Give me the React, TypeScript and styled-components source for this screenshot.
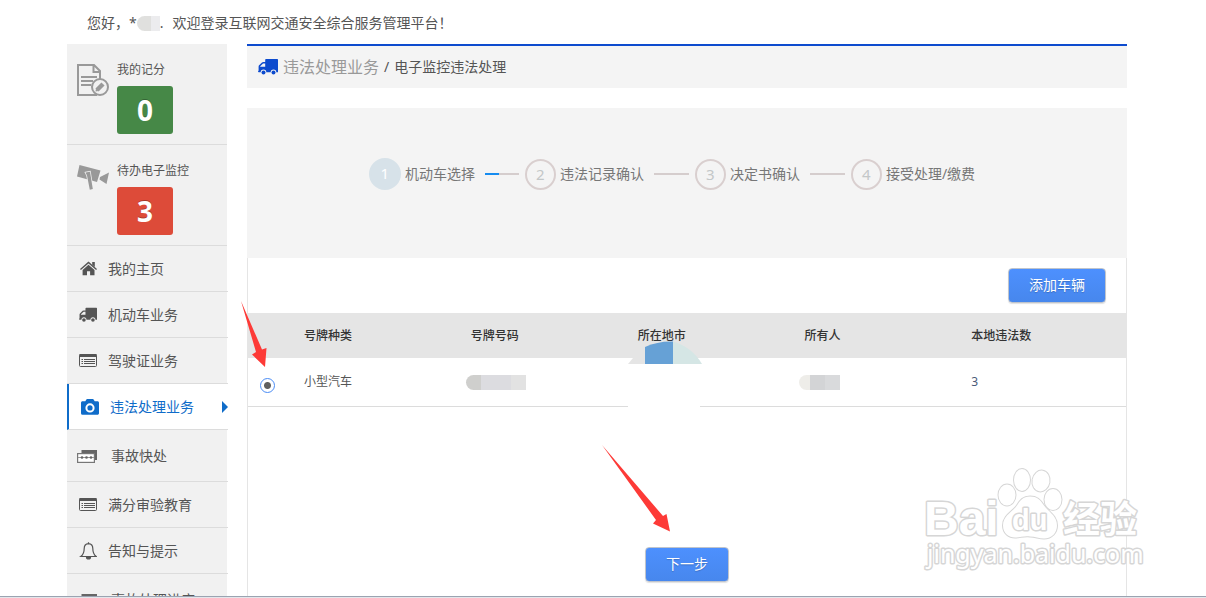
import React from "react";
import styled, { createGlobalStyle, css } from "styled-components";

const GlobalStyle = createGlobalStyle`
  * { box-sizing: border-box; }
  body {
    margin: 0;
    background: #fff;
    color: #555;
    font: 14px/20px "Noto Sans", "Noto Sans CJK SC", sans-serif;
  }
`;

const Window = styled.div`
  display: flex;
  flex-direction: column;
  height: 100vh;
  overflow: hidden;
  border-bottom: 1px solid #e3e6ea;
`;

const Viewport = styled.div`
  flex: 1;
  min-height: 0;
  display: flex;
  flex-direction: column;
  overflow: hidden;
  padding: 0 79px 0 67px;
  border-bottom: 1px solid #9ba3b1;
`;

const Greeting = styled.header`
  display: flex;
  align-items: center;
  flex: none;
  height: 44px;
  padding: 2px 20px 0;
`;

const Welcome = styled.span`
  margin-left: 9px;
`;

const Columns = styled.div`
  flex: 1;
  min-height: 0;
  display: flex;
  gap: 20px;
`;

const Sidebar = styled.aside`
  flex: none;
  width: 160px;
  background: #f1f1f1;
`;

const ScoreCard = styled.section`
  display: flex;
  gap: 8px;
  padding: 16px 10px 10px;
  border-bottom: 1px solid #dcdcdc;
`;

const ScoreIcon = styled.svg`
  flex: none;
  width: 32px;
  height: 32px;
  margin-top: 4px;
`;

const ScoreLabel = styled.div`
  margin-bottom: 6px;
  font-size: 12px;
`;

const ScoreBadge = styled.div<{ $color: string }>`
  width: 56px;
  height: 48px;
  border-radius: 3px;
  background: ${(p) => p.$color};
  color: #fff;
  font-family: "Open Sans", sans-serif;
  font-size: 28px;
  font-weight: 700;
  line-height: 48px;
  text-align: center;
  text-shadow: 0 -1px 0 rgba(0, 0, 0, 0.25);
`;

const MenuLink = styled.a<{ $active?: boolean; $wide?: boolean; $tall?: boolean }>`
  display: flex;
  align-items: center;
  gap: ${(p) => (p.$wide ? 14 : 11)}px;
  width: 161px;
  height: ${(p) => (p.$tall ? 52 : 46)}px;
  padding-left: ${(p) => (p.$wide ? 10 : 12)}px;
  border-bottom: 1px solid #dcdcdc;
  color: #555;
  text-decoration: none;

  svg {
    flex: none;
    width: ${(p) => (p.$wide ? 20 : 18)}px;
    height: 18px;
  }

  ${(p) =>
    p.$active &&
    css`
      border-left: 2px solid #0f6cc9;
      background: #fff;
      color: #0f6cc9;
      &::after {
        content: "";
        margin-left: auto;
        border: solid transparent;
        border-width: 6px 0 6px 6px;
        border-left-color: #0f6cc9;
      }
    `}
`;

const Main = styled.main`
  position: relative;
  flex: 1;
  min-width: 0;
  display: flex;
  flex-direction: column;
`;

const Breadcrumb = styled.nav`
  display: flex;
  align-items: center;
  flex: none;
  gap: 5px;
  height: 44px;
  margin-bottom: 20px;
  padding: 0 11px;
  border-top: 2px solid #0d4bce;
  background: #f4f4f4;

  svg {
    width: 20px;
    height: 18px;
    color: #0d4bce;
  }
`;

const CrumbParent = styled.a`
  color: #999;
  font-size: 16px;
  text-decoration: none;
`;

const Steps = styled.ol`
  display: flex;
  justify-content: center;
  flex: none;
  margin: 0;
  padding: 50px 30px 68px 0;
  background: #f4f4f4;
  list-style: none;
`;

const Step = styled.li`
  display: flex;
  align-items: center;
  height: 32px;
  color: #777;
  white-space: nowrap;
`;

const StepNumber = styled.span<{ $active?: boolean }>`
  width: 31px;
  height: 31px;
  margin-right: 4px;
  border: 2px solid #d9cfcf;
  border-radius: 50%;
  color: #c3c7c8;
  font-size: 15px;
  line-height: 26px;
  text-align: center;
  ${(p) =>
    p.$active &&
    css`
      width: 32px;
      height: 32px;
      border-color: #d7e2e9;
      background: #d7e2e9;
      color: #fff;
    `}
`;

const StepLine = styled.span<{ $started?: boolean }>`
  width: ${(p) => (p.$started ? 34 : 35)}px;
  height: 2px;
  margin: 0 6px 0 10px;
  background: ${(p) =>
    p.$started ? "linear-gradient(90deg, #168cf0 14px, #d5cdcd 14px)" : "#d5cdcd"};
`;

const Panel = styled.section`
  flex: 1;
  border: solid #e5e5e5;
  border-width: 0 1px;
`;

const Toolbar = styled.div`
  display: flex;
  justify-content: flex-end;
  height: 55px;
  padding: 10px 20px;
`;

const Button = styled.button`
  height: 35px;
  padding: 0 20px 2px;
  border: 1px solid #bfc4cc;
  border-radius: 4px;
  background: linear-gradient(#4d90fe, #4787ed);
  box-shadow: 0 1px 1px rgba(0, 0, 0, 0.12);
  color: #fff;
  font: inherit;
  text-shadow: 0 1px 1px rgba(0, 0, 0, 0.2);
`;

const Table = styled.table`
  width: 100%;
  table-layout: fixed;
  border-spacing: 0;
  font-size: 12px;
  text-align: left;
`;

const HeadCell = styled.th`
  width: 19%;
  height: 45px;
  padding: 0 10px;
  background: #e5e5e5;
  color: #333;
  font-weight: 500;

  &:last-child {
    width: auto;
  }
`;

const SelectHead = styled.td`
  width: 46px;
  background: #e5e5e5;
`;

const Cell = styled.td`
  position: relative;
  height: 49px;
  padding: 0 10px;
  border-bottom: 1px solid #dcdcdc;
`;

const CountLink = styled.a`
  color: #4a5a78;
  text-decoration: none;
`;

const Radio = styled.input`
  appearance: none;
  display: block;
  width: 15px;
  height: 15px;
  margin: 6px 0 0 2px;
  border: 1px solid #4a8cf5;
  border-radius: 50%;
  background: radial-gradient(circle, #5f5f5f 3px, #fff 4px);
`;

const Mask = styled.span<{ $width: number; $fill: string; $flush?: boolean }>`
  display: block;
  width: ${(p) => p.$width}px;
  height: 15px;
  margin-left: ${(p) => (p.$flush ? 0 : -5)}px;
  border-radius: 8px 0 0 8px;
  background: ${(p) => p.$fill};
`;

const CityMask = styled.svg`
  position: absolute;
  top: -17px;
  left: 0;
  width: 74px;
  height: 66px;
`;

const NextRow = styled.div`
  display: flex;
  justify-content: center;
  padding: 140px 0 20px;
`;

const Pointer = styled.svg`
  position: absolute;
  top: 0;
  left: -10px;
  width: 450px;
  height: 500px;
  pointer-events: none;
`;

const Watermark = styled.svg`
  position: absolute;
  right: 60px;
  bottom: 20px;
  width: 226px;
  height: 114px;
  pointer-events: none;
`;

const TruckIcon = () => (
  <svg viewBox="0 0 20 18" fill="currentColor" aria-hidden="true">
    <path
      fillRule="evenodd"
      d="M8 1H19.300Q20 1 20 1.700V14.200H18.300A2.800 2.800 0 0 0 12.700 14.200H8.300A2.800 2.800 0 0 0 2.700 14.200H.8Q0 14.200 0 13.500L.6 12.500V8.500Q.6 7.800 1.100 7.300L4 4.400Q4.500 4 5.200 4H7.200V1.800Q7.200 1 8 1zM2.200 8.700H7.200V5.500H5.400Q5 5.500 4.800 5.700L2.200 8.300z"
    />
    <circle cx="5.500" cy="14.500" r="2" />
    <circle cx="15.500" cy="14.500" r="2" />
  </svg>
);

const HomeIcon = () => (
  <svg viewBox="0 0 18 18" fill="currentColor" aria-hidden="true">
    <path d="M9.500 1.500 18 9l-.9 1-7.600-6.500L1.900 10 1 9z" />
    <path d="M13.200 2h2.600v5l-2.600-2.200z" />
    <path d="m9.500 4.700 6 5.200v5.300h-4.400v-4H8v4H3.600V9.900z" />
  </svg>
);

const ListIcon = () => (
  <svg viewBox="0 0 18 18" fill="none" stroke="currentColor" aria-hidden="true">
    <rect x=".5" y="2.500" width="17" height="12" rx="1" />
    <path d="M.5 3.500h17" strokeWidth="3" />
    <path d="M5 7.500h11M5 9.500h11M5 11.500h11M2.500 7.500H4M2.500 9.500H4M2.500 11.500H4" />
  </svg>
);

const CameraIcon = () => (
  <svg viewBox="0 0 18 16" fill="currentColor" aria-hidden="true">
    <path
      fillRule="evenodd"
      d="M1.500 2.300h2.800L5.200.8C5.400.3 5.800 0 6.300 0h5.400c.5 0 .9.3 1.100.8l.9 1.500h2.800c.8 0 1.500.6 1.500 1.500v10.400c0 .8-.7 1.500-1.500 1.500h-15A1.500 1.500 0 0 1 0 14.200V3.800c0-.9.7-1.500 1.500-1.500zM9 4.300a4.600 4.600 0 1 0 0 9.200 4.600 4.600 0 0 0 0-9.200zm0 2a2.600 2.600 0 1 1 0 5.200 2.600 2.600 0 0 1 0-5.200z"
    />
  </svg>
);

const CardsIcon = () => (
  <svg viewBox="0 0 20 18" aria-hidden="true">
    <path d="M4.500 3H20v10h-2V6H4.500z" fill="#666" />
    <rect x=".6" y="6.600" width="16.800" height="8.800" fill="#fff" stroke="#777" strokeWidth="1.200" />
    <path d="M1 10.500h16" stroke="#999" />
    <circle cx="5" cy="10.500" r="1.300" fill="#666" />
    <circle cx="9.500" cy="10.500" r="1.300" fill="#666" />
    <circle cx="14" cy="10.500" r="1.300" fill="#666" />
  </svg>
);

const BellIcon = () => (
  <svg viewBox="0 0 18 18" fill="none" stroke="currentColor" strokeWidth="1.200" aria-hidden="true">
    <path d="M9.500 1.700C6.500 1.900 5.200 4 5.200 6.500c0 4-1.200 6.300-3.400 8h15.400c-2.200-1.700-3.400-4-3.400-8 0-2.500-1.300-4.600-4.300-4.800zM9.500.3v1.400" />
    <path d="M7.500 15a2 2 0 0 0 4 0z" fill="currentColor" />
  </svg>
);

const MENU = [
  { label: "我的主页", icon: HomeIcon },
  { label: "机动车业务", icon: TruckIcon },
  { label: "驾驶证业务", icon: ListIcon },
  { label: "违法处理业务", icon: CameraIcon, active: true },
  { label: "事故快处", icon: CardsIcon, wide: true, tall: true },
  { label: "满分审验教育", icon: ListIcon },
  { label: "告知与提示", icon: BellIcon },
  { label: "事故处理进度", icon: CardsIcon, wide: true, tall: true },
];

const STEPS = ["机动车选择", "违法记录确认", "决定书确认", "接受处理/缴费"];
const HEADINGS = ["号牌种类", "号牌号码", "所在地市", "所有人", "本地违法数"];

export default function App() {
  return (
    <Window>
      <GlobalStyle />
      <Viewport>
        <Greeting>
          <span>您好，*</span>
          <Mask $flush $width={23} $fill="linear-gradient(90deg, #e0e0de 14px, #ececee 14px)" />
          <span>.</span>
          <Welcome>欢迎登录互联网交通安全综合服务管理平台！</Welcome>
        </Greeting>
        <Columns>
          <Sidebar>
            <ScoreCard>
              <ScoreIcon viewBox="0 0 32 32" fill="none" stroke="#999" strokeWidth="2" aria-hidden="true">
                <path d="M20 31H1V1h16l6 6v8M16.500 1v7H23M4 13h16M4 17h12M4 21h10" />
                <circle cx="23" cy="23" r="8" fill="#f1f1f1" />
                <path d="m20 26 6-6" strokeWidth="4.500" />
                <path d="m18.500 27.500.5-3 2.500 2.500z" fill="#999" stroke="none" />
              </ScoreIcon>
              <div>
                <ScoreLabel>我的记分</ScoreLabel>
                <ScoreBadge $color="#468847">0</ScoreBadge>
              </div>
            </ScoreCard>
            <ScoreCard>
              <ScoreIcon viewBox="0 0 32 32" fill="#999" aria-hidden="true">
                <path d="M2.500 0 23.500 5.500 20 17 0 11.500zM23 12l9-4.500L29.500 19 22.500 14.500z" />
                <path
                  d="m8.500 7.500 4.500-.8L15.800 24l-3 .8L10 10.500z"
                  stroke="#f1f1f1"
                  strokeWidth="1.500"
                  paintOrder="stroke"
                />
              </ScoreIcon>
              <div>
                <ScoreLabel>待办电子监控</ScoreLabel>
                <ScoreBadge $color="#dd4b39">3</ScoreBadge>
              </div>
            </ScoreCard>
            <nav>
              {MENU.map(({ label, icon: Icon, active, wide, tall }) => (
                <MenuLink key={label} href="#" $active={active} $wide={wide} $tall={tall}>
                  <Icon />
                  {label}
                </MenuLink>
              ))}
            </nav>
          </Sidebar>
          <Main>
            <Breadcrumb>
              <TruckIcon />
              <CrumbParent href="#">违法处理业务</CrumbParent>
              <span>/</span>
              <span>电子监控违法处理</span>
            </Breadcrumb>
            <Steps>
              {STEPS.map((label, i) => (
                <Step key={label}>
                  <StepNumber $active={i === 0}>{i + 1}</StepNumber>
                  {label}
                  {i < STEPS.length - 1 && <StepLine $started={i === 0} />}
                </Step>
              ))}
            </Steps>
            <Panel>
              <Toolbar>
                <Button type="button">添加车辆</Button>
              </Toolbar>
              <Table>
                <thead>
                  <tr>
                    <SelectHead />
                    {HEADINGS.map((h) => (
                      <HeadCell key={h} scope="col">
                        {h}
                      </HeadCell>
                    ))}
                  </tr>
                </thead>
                <tbody>
                  <tr>
                    <Cell>
                      <Radio type="radio" name="vehicle" aria-label="小型汽车" defaultChecked />
                    </Cell>
                    <Cell>小型汽车</Cell>
                    <Cell>
                      <Mask $width={60} $fill="linear-gradient(90deg, #cfcfcd 15px, #dcdce0 15px 45px, #e2e2e2 45px)" />
                    </Cell>
                    <Cell>
                      <CityMask viewBox="0 0 74 66" aria-hidden="true">
                        <path d="M0 23h72v43H0z" fill="#fff" />
                        <path d="M0 23 5 17h12v6z" fill="#e5e5e5" />
                        <path d="M17 6Q30 0 45 .5V23H17z" fill="#66a1d6" />
                        <path d="M45 .5Q64 6 74 23H45z" fill="#d5e6e5" />
                      </CityMask>
                    </Cell>
                    <Cell>
                      <Mask $width={41} $fill="linear-gradient(90deg, #eeede9 11px, #d3d4d6 11px 26px, #d9dadc 26px)" />
                    </Cell>
                    <Cell>
                      <CountLink href="#">3</CountLink>
                    </Cell>
                  </tr>
                </tbody>
              </Table>
              <NextRow>
                <Button type="button">下一步</Button>
              </NextRow>
            </Panel>
            <Pointer viewBox="0 0 450 500" fill="#fd3a37" aria-hidden="true">
              <path d="M4 257 25 305.500 29.500 304 28 323 15 310.500 19 308z" />
              <path d="M365 401 426 472 429.500 470 433 487.500 416 479.500 419 476z" />
            </Pointer>
          </Main>
        </Columns>
      </Viewport>
      <Watermark
        viewBox="0 0 226 114"
        fill="#fff"
        stroke="#d6d6d6"
        strokeWidth="3"
        strokeLinejoin="round"
        fontFamily="'Liberation Sans', sans-serif"
        paintOrder="stroke"
        aria-hidden="true"
      >
        <g strokeWidth="2">
          <ellipse cx="87" cy="31" rx="8.500" ry="10.500" />
          <ellipse cx="102" cy="16" rx="8" ry="11" />
          <ellipse cx="121" cy="17" rx="8.500" ry="10.500" transform="rotate(10 121 17)" />
          <ellipse cx="133" cy="35.500" rx="8.500" ry="10.500" />
          <path d="M110 32.500c-7 0-10 4-13 9-4 6-14 10-14 20 0 8 6 12 12 12 5 0 10-2 15-1 5 0 9 2 14 2 8 0 13-6 13-13 0-10-9-14-13-20-4-6-7-9-14-9z" />
        </g>
        <text x="4" y="71" fontSize="48" fontWeight="700">Bai</text>
        <text x="92" y="66" fontSize="29" fontWeight="700">du</text>
        <text x="143" y="69" fontSize="37" fontWeight="700" fontFamily="'Noto Sans CJK SC', sans-serif">经验</text>
        <text x="7" y="99" fontSize="25" fontFamily="'Noto Sans', sans-serif">jingyan.baidu.com</text>
      </Watermark>
    </Window>
  );
}
